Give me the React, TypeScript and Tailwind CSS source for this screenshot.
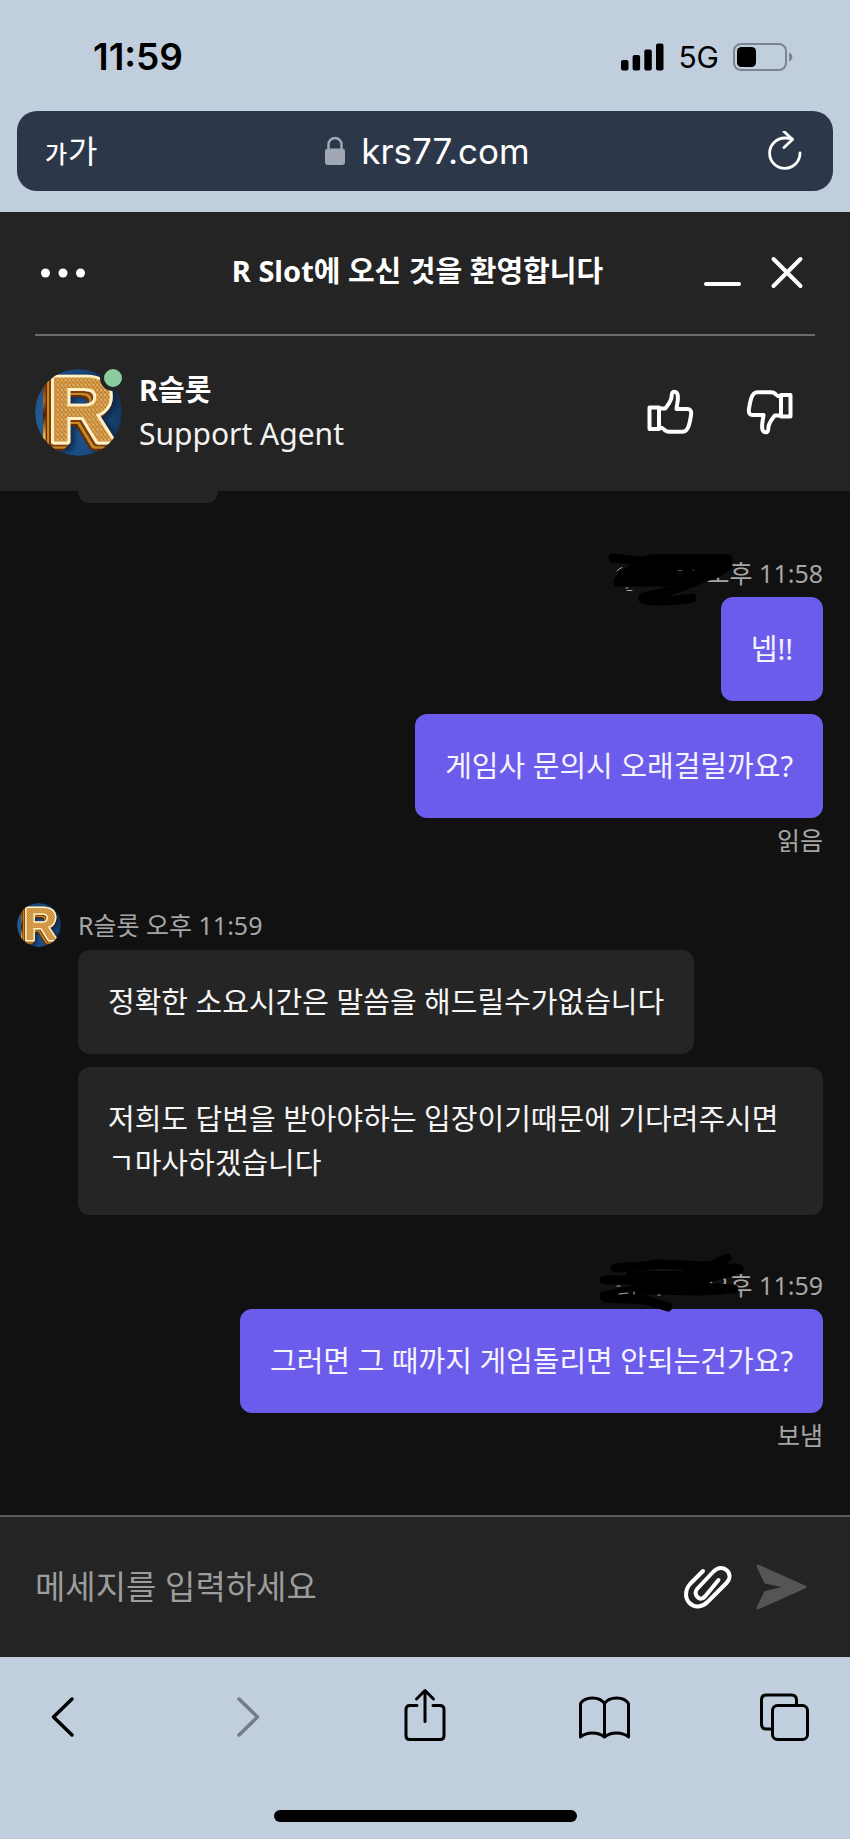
import React, { useId } from 'react';

// The ring takes the colour of the surface around the avatar and trims the letter's corners
const Avatar = ({ className }: { className: string }) => {
  const id = useId();

  return (
    <svg className={`overflow-visible ${className}`} viewBox="0 0 88 88" role="img" aria-label="R슬롯">
      <defs>
        <radialGradient id={`${id}bg`} cx="0.25" cy="0.55" r="0.9">
          <stop offset="0" stopColor="#2563a0" />
          <stop offset="0.6" stopColor="#1a4a80" />
          <stop offset="1" stopColor="#0c2848" />
        </radialGradient>
        <linearGradient id={`${id}side`} x1="0" y1="0" x2="0.3" y2="1">
          <stop offset="0" stopColor="#5b1d05" />
          <stop offset="0.3" stopColor="#b06a1e" />
          <stop offset="0.5" stopColor="#4a1503" />
          <stop offset="0.75" stopColor="#e0a935" />
          <stop offset="0.9" stopColor="#f6dc6a" />
          <stop offset="1" stopColor="#7a3c0a" />
        </linearGradient>
        <pattern id={`${id}mesh`} width="4" height="5" patternUnits="userSpaceOnUse">
          <rect width="4" height="5" fill="#dda04a" />
          <path d="M0 0L4 5" stroke="#a9702a" strokeWidth="1.2" />
          <path d="M4 0L2 2.5" stroke="#f3cd80" strokeWidth="1" />
        </pattern>
        <filter id={`${id}depth`} x="-0.3" y="-0.3" width="1.6" height="1.6">
          <feDropShadow dx="-2" dy="2" stdDeviation="0" floodColor="#7a3a0a" />
          <feDropShadow dx="-2" dy="2" stdDeviation="0" floodColor="#c98a28" />
          <feDropShadow dx="-1.5" dy="2" stdDeviation="0" floodColor="#6b2a06" />
          <feDropShadow dx="5" dy="2" stdDeviation="2" floodColor="#081a30" floodOpacity="0.7" />
        </filter>
      </defs>
      <circle cx="44" cy="44" r="44" fill={`url(#${id}bg)`} />
      <path d="M8 12h12v68H8z" fill={`url(#${id}side)`} />
      <text
        x="13"
        y="73"
        fontFamily="'Liberation Sans', Arial, sans-serif"
        fontWeight="700"
        fontSize="94"
        fill={`url(#${id}mesh)`}
        stroke="#fff1c4"
        strokeWidth="6"
        strokeLinejoin="round"
        style={{ paintOrder: 'stroke' }}
        filter={`url(#${id}depth)`}
      >
        R
      </text>
      <circle cx="44" cy="44" r="51" fill="none" stroke="currentColor" strokeWidth="14" />
    </svg>
  );
};

const ThumbIcon = ({ className = '' }: { className?: string }) => (
  <svg className={`h-[50px] w-[50px] ${className}`} viewBox="0 0 50 50" fill="none" stroke="currentColor" strokeWidth="4" strokeLinejoin="round">
    <rect x="4.5" y="20.5" width="9.5" height="21.5" />
    <path d="M14 21.5h6.2c3-3.6 5.2-7 6.2-10.5.4-2.600-.1-6.300 2.600-6.300 3.400 0 4 3 3.900 6.300-.1 4-1 7.500-1.400 11H42c3.500 0 4.500 2 4.100 5.500-.5 4-1.100 7-2.100 10.500-1.200 4-2.500 6.700-6.500 6.700H24c-3 0-4-1-5.500-2.700-1.200-1.400-2.300-1.500-4.500-1.500" />
  </svg>
);

type BubbleProps = { mine?: boolean; children: React.ReactNode };

const Bubble = ({ mine, children }: BubbleProps) => (
  <p className={`rounded-xl p-[30px] text-[29px] leading-[44px] break-keep ${mine ? 'bg-[#6c5ceb] text-[#f5f4ff]' : 'bg-[#252525] text-[#f5f5f5]'}`}>
    {children}
  </p>
);

const App = () => {
  return (
    <div className="flex min-h-screen flex-col bg-[#c1cede] font-['Noto_Sans','Noto_Sans_CJK_KR',sans-serif]">
      {/* Status bar */}
      <div className="flex h-[111px] items-center justify-between pt-0.5 pr-[57px] pl-[93px] font-['Inter',sans-serif] text-black">
        <span className="text-[37px] font-semibold">11:59</span>
        <div className="flex items-center gap-[14px]">
          <svg className="h-7 w-[43px]" viewBox="0 0 43 28" aria-hidden="true">
            <rect x="0" y="17" width="7.500" height="10.500" rx="2" />
            <rect x="11.600" y="12" width="7.500" height="15.500" rx="2" />
            <rect x="23.300" y="6.500" width="7.500" height="21" rx="2" />
            <rect x="35" y="0.500" width="7.500" height="27" rx="2" />
          </svg>
          <span className="text-3xl">5G</span>
          <svg className="h-7 w-[60px]" viewBox="0 0 60 28" aria-hidden="true">
            <rect x="1" y="1" width="52" height="26" rx="7" fill="none" stroke="#7c8591" strokeWidth="2" />
            <rect x="4" y="4" width="19" height="20" rx="4.500" />
            <path d="M56 9.500c4.500 1.500 4.500 7.500 0 9z" fill="#7c8591" />
          </svg>
        </div>
      </div>

      {/* Address bar */}
      <div className="mx-[17px] mb-[21px] grid h-20 grid-cols-[1fr_auto_1fr] items-center rounded-[20px] bg-[#2c384a] pr-[31px] pl-7 text-white">
        <button type="button" className="flex items-baseline gap-px justify-self-start" aria-label="글자 크기">
          <span className="text-2xl font-medium">가</span>
          <span className="text-[32px]">가</span>
        </button>
        <div className="ml-2 flex items-center gap-4">
          <svg className="h-[30px] w-5" viewBox="0 0 20 30" aria-hidden="true">
            <rect x="0" y="12.500" width="20" height="16.500" rx="3" fill="#a1a7b5" />
            <path d="M3.500 14V8.500a6.500 6.500 0 0 1 13 0V14" fill="none" stroke="#a1a7b5" strokeWidth="2.500" />
          </svg>
          <span className="font-['Inter',sans-serif] text-[35px]">krs77.com</span>
        </div>
        <button type="button" className="justify-self-end" aria-label="새로 고침">
          <svg className="h-10 w-[34px]" viewBox="0 0 34 40" fill="none" stroke="currentColor" strokeWidth="2.800" strokeLinecap="round" strokeLinejoin="round">
            <path d="M32 22A15.200 15.200 0 1 1 16.800 7c2.500 0 5 0 7.500.8" />
            <path d="M16 0.500l8.500 8-8.500 8" />
          </svg>
        </button>
      </div>

      {/* Chat header */}
      <header className="bg-[#242424] px-[35px] text-white">
        <div className="flex h-[124px] items-center border-b-2 border-[#6b6b6b] pb-1">
          <div className="w-[100px]">
            <button type="button" className="block" aria-label="메뉴">
              <svg className="h-12 w-14" viewBox="0 0 56 48" fill="currentColor">
                <circle cx="10.500" cy="26" r="4.500" />
                <circle cx="28" cy="26" r="4.500" />
                <circle cx="45.500" cy="26" r="4.500" />
              </svg>
            </button>
          </div>
          <h1 className="flex-1 text-center text-[29px] leading-[44px] font-bold">R Slot에 오신 것을 환영합니다</h1>
          <div className="flex w-[115px] gap-5">
            <button type="button" aria-label="최소화">
              <svg className="h-12 w-[44px]" viewBox="0 0 44 48" stroke="currentColor" strokeWidth="4" strokeLinecap="round">
                <path d="M6 37h33" />
              </svg>
            </button>
            <button type="button" aria-label="닫기">
              <svg className="h-12 w-[44px]" viewBox="0 0 44 48" stroke="currentColor" strokeWidth="4" strokeLinecap="round">
                <path d="M9.500 12l27 27M36.500 12l-27 27" />
              </svg>
            </button>
          </div>
        </div>
        <div className="flex h-[155px] items-center pb-[3px]">
          <div className="relative">
            <Avatar className="h-[87px] w-[87px] text-[#242424]" />
            <span className="absolute -top-1 -right-1 h-[26px] w-[26px] rounded-full border-4 border-[#242424] bg-[#8acb9f]" />
          </div>
          <div className="ml-[17px] flex-1 text-[29px] leading-[44px]">
            <p className="font-bold">R슬롯</p>
            <p className="text-3xl leading-[44px] text-[#f2f2f2]">Support Agent</p>
          </div>
          <div className="mr-5 flex gap-[50px]">
            <button type="button" aria-label="좋아요">
              <ThumbIcon />
            </button>
            <button type="button" aria-label="싫어요">
              <ThumbIcon className="rotate-180" />
            </button>
          </div>
        </div>
      </header>

      {/* Messages */}
      <main className="flex flex-1 flex-col bg-[#111111] pr-[27px] pl-[17px] text-[25px] leading-8 text-[#a6a6a6]">
        <div className="ml-[61px] h-3 w-[140px] rounded-b-xl bg-[#252525]" />

        <section className="mt-[54px] flex flex-col items-end">
          <div className="relative mb-2">
            <span>오후 11:58</span>
            {/* Blacked-out sender name */}
            <svg className="absolute -top-[7px] right-[83px] h-[60px] w-[140px]" viewBox="0 0 140 60" fill="none" strokeLinecap="round" strokeLinejoin="round" aria-hidden="true">
              <g stroke="#000" strokeWidth="9">
                <path d="M13 8L40 11L62 9L128 9" />
                <path fill="#000" d="M18 32L22 25L36 17L50 9L124 9L128 16L118 23L100 29L86 32Z" />
                <path d="M124 18L96 31L70 41L44 47C36 52 70 52 92 48" />
              </g>
              <path d="M17 21q2-3 5-3.500M26 38h2M27 40.500h5" stroke="#a6a6a6" strokeWidth="1" />
              <path d="M78 20.500h4M93 20h1" stroke="#555555" strokeWidth="1" />
            </svg>
          </div>
          <div className="flex flex-col items-end gap-[13px]">
            <Bubble mine>넵!!</Bubble>
            <Bubble mine>게임사 문의시 오래걸릴까요?</Bubble>
          </div>
          <span className="mt-[6px]">읽음</span>
        </section>

        <section className="mt-[47px]">
          <div className="mb-[3px] flex items-center gap-[17px]">
            <Avatar className="h-11 w-11 text-[#111111]" />
            <span>R슬롯 오후 11:59</span>
          </div>
          <div className="ml-[61px] flex flex-col items-start gap-[13px]">
            <Bubble>정확한 소요시간은 말씀을 해드릴수가없습니다</Bubble>
            <Bubble>저희도 답변을 받아야하는 입장이기때문에 기다려주시면 ㄱ마사하겠습니다</Bubble>
          </div>
        </section>

        <section className="mt-[54px] mb-[60px] flex flex-col items-end">
          <div className="relative mb-2">
            <span>오후 11:59</span>
            {/* Blacked-out sender name */}
            <svg className="absolute -top-[18px] right-[73px] h-[62px] w-[160px]" viewBox="0 0 160 62" fill="none" strokeLinecap="round" strokeLinejoin="round" aria-hidden="true">
              <g stroke="#000" strokeWidth="9">
                <path d="M25 17L54 15L68 13L120 15L149 18" />
                <path d="M137 7L120 15L96 22" />
                <path d="M14 29L90 29L145 17" />
                <path fill="#000" d="M40 25L60 33L100 32L142 21L100 24Z" />
                <path d="M90 29L14 45C12 49 40 47 56 49L78 56" />
                <path d="M18 44L60 39L110 40L144 38L110 36L56 36" />
              </g>
              <path d="M27 35h3M29 43l9-1M44 43v-2M68 44h2" stroke="#a6a6a6" strokeWidth="1.200" />
            </svg>
          </div>
          <Bubble mine>그러면 그 때까지 게임돌리면 안되는건가요?</Bubble>
          <span className="mt-[6px]">보냄</span>
        </section>
      </main>

      {/* Composer */}
      <form className="flex h-[142px] items-center border-t-2 border-[#5c5c5c] bg-[#242424] pr-10 pl-[35px]">
        <input
          type="text"
          aria-label="메세지"
          placeholder="메세지를 입력하세요"
          className="min-w-0 flex-1 bg-transparent text-[33px] text-white outline-none placeholder:text-[#9c9c9c]"
        />
        <button type="button" className="text-white" aria-label="파일 첨부">
          <svg className="h-[50px] w-[52px]" viewBox="0 0 52 50" fill="none" stroke="currentColor" strokeWidth="4" strokeLinecap="round" strokeLinejoin="round">
            <path d="M21 9L8.500 21.500C3 27.500 2.500 36 7.500 41s12.500 4.500 18-1L44 21.500c4.500-4.500 4.500-9.500 1-13s-9-3.500-13.500 1L15.500 26.500c-2.500 3-2.500 6 0 8.500s5 2 7.500-.5L36.500 18" />
          </svg>
        </button>
        <button type="submit" className="ml-5 text-[#555555]" aria-label="보내기">
          <svg className="h-[50px] w-[56px]" viewBox="0 0 56 50" fill="currentColor" stroke="currentColor" strokeWidth="3" strokeLinejoin="round">
            <path d="M4 4L51 25L4 46L11.500 30.500L34 25L11.500 20Z" />
          </svg>
        </button>
      </form>

      {/* Browser toolbar */}
      <nav className="flex h-[182px] flex-col items-center justify-between pt-[30px] pb-[17px] text-black">
        <div className="flex w-full justify-between pr-[39px] pl-[37px]">
          <button type="button" aria-label="뒤로">
            <svg className="h-14 w-[52px]" viewBox="0 0 52 56" fill="none" stroke="currentColor" strokeWidth="3.500" strokeLinecap="round" strokeLinejoin="round">
              <path d="M35 12L16.500 30l18.500 18" />
            </svg>
          </button>
          <button type="button" className="text-[#737b87]" aria-label="앞으로">
            <svg className="h-14 w-[52px]" viewBox="0 0 52 56" fill="none" stroke="currentColor" strokeWidth="3.500" strokeLinecap="round" strokeLinejoin="round">
              <path d="M21 12l18.500 18L21 48" />
            </svg>
          </button>
          <button type="button" aria-label="공유">
            <svg className="h-14 w-[52px]" viewBox="0 0 52 56" fill="none" stroke="currentColor" strokeWidth="3" strokeLinecap="round" strokeLinejoin="round">
              <path d="M19 18.500h-7c-3 0-4 1.500-4 4v26c0 3 1.500 4 4 4h30c3 0 4-1.500 4-4v-26c0-3-1.500-4-4-4h-7" />
              <path d="M27 34.500V4M18.500 12L27 3.500l8.500 8.500" />
            </svg>
          </button>
          <button type="button" aria-label="책갈피">
            <svg className="h-14 w-[52px]" viewBox="0 0 52 56" fill="none" stroke="currentColor" strokeWidth="3" strokeLinejoin="round">
              <path d="M25.500 16.500c-5-7-19-7.500-24 0v33.500c6-5.500 17.500-5.500 24 0 6.500-5.500 18-5.500 24 0V16.500c-5-7.500-19-7-24 0zM25.500 16.500v34" />
            </svg>
          </button>
          <button type="button" aria-label="탭">
            <svg className="h-14 w-[52px]" viewBox="0 0 52 56" fill="none" stroke="currentColor" strokeWidth="3" strokeLinejoin="round">
              <path d="M13 42H7.500c-3.500 0-5-1.500-5-5V13c0-3.500 1.500-5 5-5h25c3.500 0 5 1.500 5 5v5.500" />
              <rect x="13.500" y="18.500" width="35" height="34" rx="5" />
            </svg>
          </button>
        </div>
        <div className="h-3 w-[303px] rounded-full bg-black" />
      </nav>
    </div>
  );
};

export default App;
